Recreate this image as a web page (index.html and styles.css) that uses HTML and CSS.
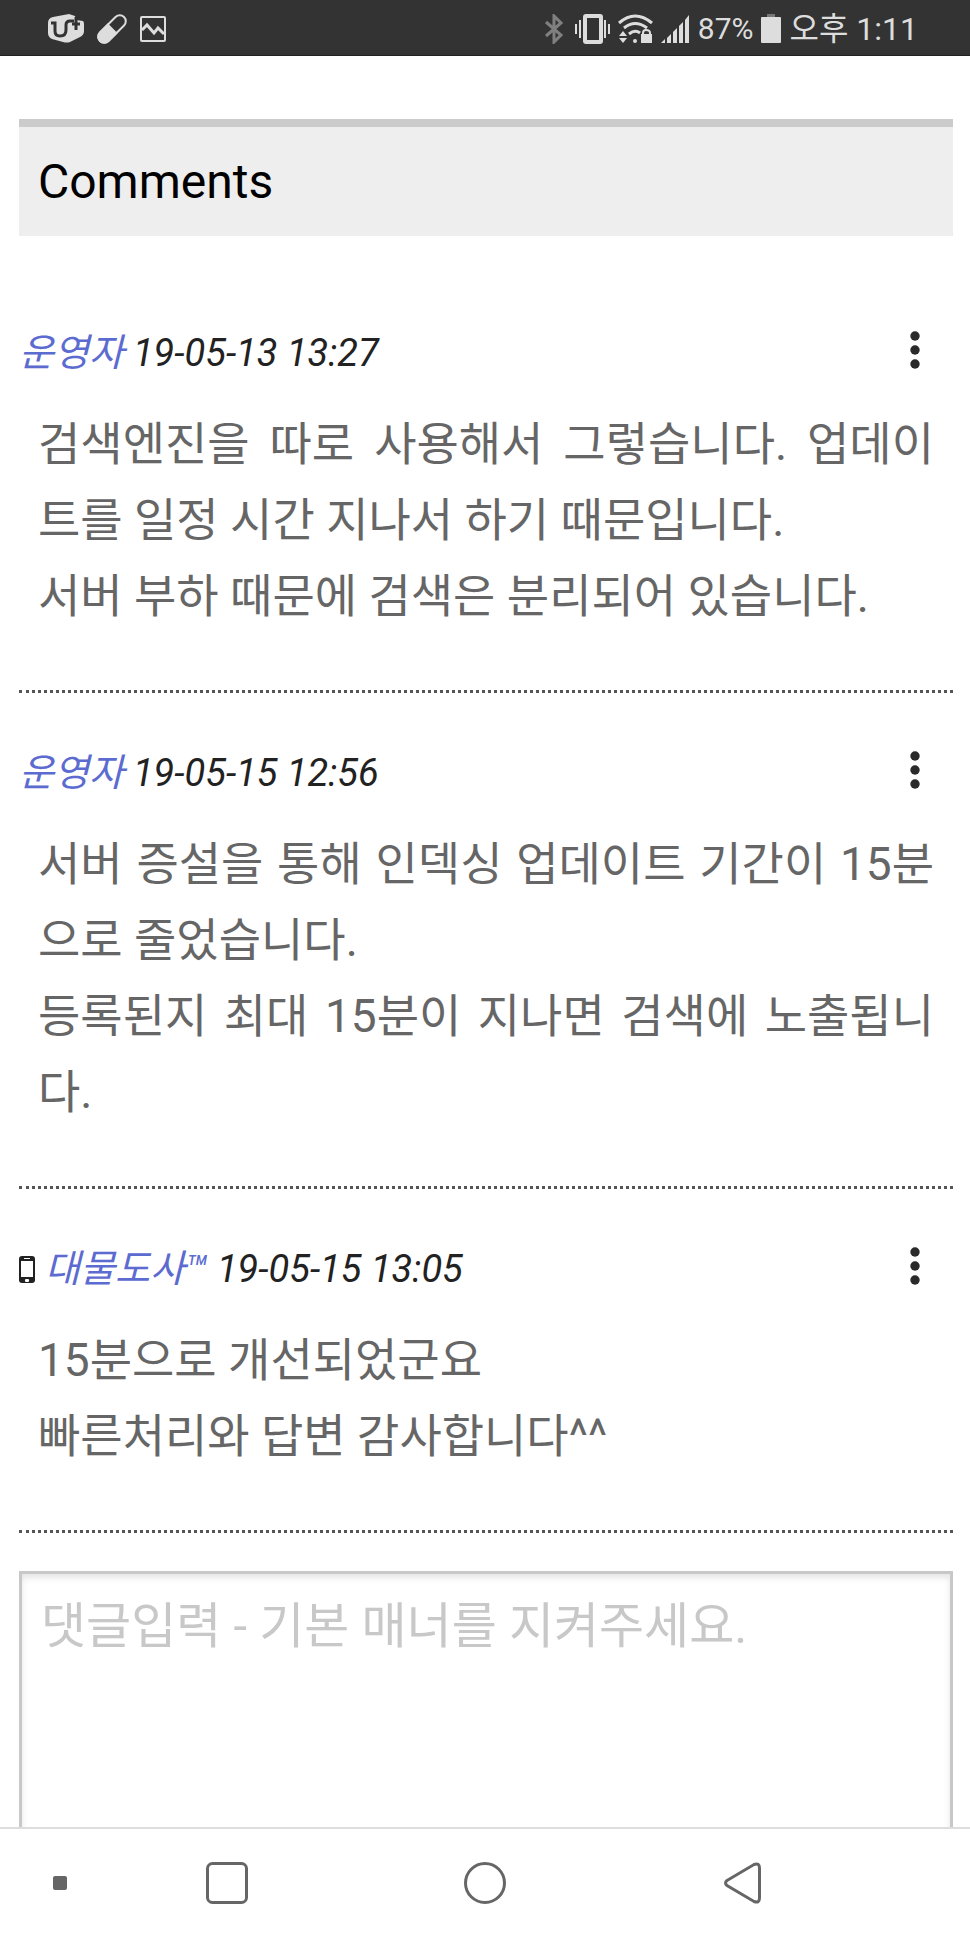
FILE: index.html
```html
<!DOCTYPE html>
<html lang="ko">
<head>
  <meta charset="UTF-8" />
  <meta name="viewport" content="width=device-width, initial-scale=1.0"/>
  <title>Comments</title>
  <link rel="stylesheet" href="styles.css">
</head>
<body>

  <header class="status-bar">
    <div class="status-left">
      <svg width="36" height="30" viewBox="0 0 36 30">
        <path d="M5 3 L21 0 L27 2 L28 6 L35 7 Q36 8 36 10 V17 Q36 21 32 23 L22 28 Q19 29 15 28 L4 25 Q0 23 0 19 V9 Q0 4 5 3Z" fill="#ddd"/>
        <path d="M3 9 H7 V17 Q7 22 12 22 Q18 22 18 16 V11 Q18 7 22 7 H26" fill="none" stroke="#333" stroke-width="3"/>
        <path d="M28 3 V16 M24 10 H32" fill="none" stroke="#333" stroke-width="3"/>
      </svg>
      <svg width="30" height="30" viewBox="0 0 30 30">
        <g transform="rotate(45 15 15)">
          <rect x="9" y="-2" width="12" height="34" rx="6" fill="none" stroke="#ddd" stroke-width="2"/>
          <path d="M8 14 H22 V26 A7 7 0 0 1 8 26Z" fill="#ddd"/>
        </g>
      </svg>
      <svg width="26" height="30" viewBox="0 0 26 30">
        <rect x="1" y="3" width="24" height="24" rx="1" fill="none" stroke="#ddd" stroke-width="2"/>
        <path d="M2 16 L7 11 L14 19 L18 14 L24 20" fill="none" stroke="#ddd" stroke-width="3"/>
      </svg>
    </div>
    <div class="status-right">
      <svg width="26" height="30" viewBox="0 0 26 30">
        <path d="M5 8 L20 21 L13 28 V2 L20 9 L5 22" fill="none" stroke="#808080" stroke-width="3"/>
      </svg>
      <svg width="35" height="30" viewBox="0 0 35 30">
        <rect x="10" y="2" width="16" height="26" rx="1" fill="none" stroke="#ddd" stroke-width="4"/>
        <path d="M1 10 V20 M5 6 V24 M30 6 V24 M34 10 V20" stroke="#ddd" stroke-width="2"/>
      </svg>
      <svg width="35" height="30" viewBox="0 0 35 30">
        <path d="M1 9 Q17 -5 34 9 M6 14 Q17 5 29 14 M11 20 Q17 15 22 19" fill="none" stroke="#ddd" stroke-width="3"/>
        <path d="M1 22 L5 17 L9 22Z M1 24 L5 29 L9 24Z" fill="#ddd"/>
        <circle cx="17" cy="27" r="2" fill="#ddd"/>
        <rect x="23" y="20" width="11" height="9" fill="#ddd"/>
        <path d="M25 21 V19 Q25 16 28 16 Q32 16 32 19 V21" fill="none" stroke="#ddd" stroke-width="2"/>
      </svg>
      <svg width="29" height="30" viewBox="0 0 29 30">
        <path d="M0 29 L4 25 V29Z M6 24 L10 20 V29 H6Z M12 18 L16 14 V29 H12Z M18 12 L22 8 V29 H18Z M24 6 L28 1 V29 H24Z" fill="#ddd"/>
      </svg>
      <span class="battery-level">87%</span>
      <svg width="20" height="30" viewBox="0 0 20 30">
        <rect x="6" y="0" width="8" height="4" fill="#777"/>
        <rect x="0" y="3" width="20" height="26" rx="1" fill="#ddd"/>
      </svg>
      <span class="clock">오후 1:11</span>
    </div>
  </header>

  <main class="content">
    <h1 class="section-title">Comments</h1>

    <article class="comment">
      <div class="comment-head">
        <a href="#" class="author">운영자</a>
        <time class="date">19-05-13 13:27</time>
        <button type="button" class="menu-btn" aria-label="메뉴">
          <svg width="10" height="38" viewBox="0 0 10 38">
            <circle cx="5" cy="5" r="4.700"/><circle cx="5" cy="19" r="4.700"/><circle cx="5" cy="33" r="4.700"/>
          </svg>
        </button>
      </div>
      <p class="comment-text">검색엔진을 따로 사용해서 그렇습니다. 업데이트를 일정 시간 지나서 하기 때문입니다.<br>서버 부하 때문에 검색은 분리되어 있습니다.</p>
    </article>

    <article class="comment">
      <div class="comment-head">
        <a href="#" class="author">운영자</a>
        <time class="date">19-05-15 12:56</time>
        <button type="button" class="menu-btn" aria-label="메뉴">
          <svg width="10" height="38" viewBox="0 0 10 38">
            <circle cx="5" cy="5" r="4.700"/><circle cx="5" cy="19" r="4.700"/><circle cx="5" cy="33" r="4.700"/>
          </svg>
        </button>
      </div>
      <p class="comment-text">서버 증설을 통해 인덱싱 업데이트 기간이 15분으로 줄었습니다.<br>등록된지 최대 15분이 지나면 검색에 노출됩니다.</p>
    </article>

    <article class="comment">
      <div class="comment-head">
        <svg class="mobile-icon" width="16" height="27" viewBox="0 0 16 27">
          <rect x="0" y="0" width="16" height="27" rx="3" fill="#222"/>
          <rect x="2" y="5" width="12" height="16" fill="#fff"/>
          <rect x="5" y="2" width="6" height="1" fill="#fff"/>
          <rect x="6" y="23" width="4" height="3" rx="1" fill="#fff"/>
        </svg>
        <a href="#" class="author">대물도사™</a>
        <time class="date">19-05-15 13:05</time>
        <button type="button" class="menu-btn" aria-label="메뉴">
          <svg width="10" height="38" viewBox="0 0 10 38">
            <circle cx="5" cy="5" r="4.700"/><circle cx="5" cy="19" r="4.700"/><circle cx="5" cy="33" r="4.700"/>
          </svg>
        </button>
      </div>
      <p class="comment-text">15분으로 개선되었군요<br>빠른처리와 답변 감사합니다^^</p>
    </article>

    <form class="comment-form">
      <textarea class="comment-input" name="comment" aria-label="댓글입력" placeholder="댓글입력 - 기본 매너를 지켜주세요."></textarea>
    </form>
  </main>

  <nav class="nav-bar">
    <button type="button" class="nav-btn nav-dot" aria-label="숨기기">
      <svg width="14" height="14" viewBox="0 0 14 14"><rect width="14" height="14" rx="2" fill="#666"/></svg>
    </button>
    <button type="button" class="nav-btn" aria-label="최근 앱">
      <svg width="42" height="42" viewBox="0 0 42 42"><rect x="1.5" y="1.5" width="39" height="39" rx="5"/></svg>
    </button>
    <button type="button" class="nav-btn" aria-label="홈">
      <svg width="42" height="42" viewBox="0 0 42 42"><circle cx="21" cy="21" r="19.5"/></svg>
    </button>
    <button type="button" class="nav-btn" aria-label="뒤로">
      <svg width="38" height="42" viewBox="0 0 38 42"><path d="M3 18.500 L30 2.500 Q35.500 0.500 35.500 6 V36 Q35.500 41.500 30 39.500 L3 23.500 Q0 21 3 18.500Z"/></svg>
    </button>
  </nav>

</body>
</html>
```
FILE: styles.css
```css
* {
  margin: 0;
  padding: 0;
  box-sizing: border-box;
  font-family: Roboto, "Noto Sans CJK KR", sans-serif;
}

body {
  height: 100vh;
  display: flex;
  flex-direction: column;
  background: #fff;
  color: #222;
}

/* status bar */
.status-bar {
  flex: none;
  display: flex;
  justify-content: space-between;
  align-items: center;
  height: 56px;
  padding: 2px 52px 0 48px;
  background: #333;
  border-bottom: 1px solid #222;
  color: #ddd;
}

.status-left,
.status-right {
  display: flex;
  align-items: center;
}

.status-left {
  gap: 13px;
}

.status-right {
  gap: 8px;
}

.battery-level {
  font-size: 30px;
}

.clock {
  font-size: 32px;
  line-height: 40px;
}

/* comments */
.content {
  flex: 1;
  min-height: 0;
  overflow: hidden;
  padding: 63px 17px 0 19px;
}

.section-title {
  margin-bottom: 37px;
  padding: 24px 19px;
  border-top: 8px solid #cbcbcb;
  background: #eee;
  color: #000;
  font-size: 48px;
  font-weight: 400;
  line-height: 61px;
}

.comment {
  padding: 56px 0;
  border-bottom: 3px dotted #555;
}

.comment-head {
  display: flex;
  align-items: center;
  margin-bottom: 29px;
  font-size: 38px;
  font-style: italic;
  line-height: 48px;
}

.mobile-icon {
  margin-right: 10px;
}

.author {
  color: #5c6bd0;
  text-decoration: none;
}

.date {
  margin-left: 9px;
}

.menu-btn {
  display: flex;
  margin-left: auto;
  padding: 0 33px 6px;
  border: none;
  background: none;
  fill: #2a2a2a;
  cursor: pointer;
}

.comment-text {
  padding: 0 19px;
  color: #666;
  font-size: 46px;
  line-height: 76px;
  text-align: justify;
}

.comment-form {
  padding-top: 38px;
}

.comment-input {
  display: block;
  width: 100%;
  height: 300px;
  padding: 18px 19px;
  border: 3px solid #c8c8c8;
  border-radius: 0;
  box-shadow: inset 0 4px 6px rgba(0, 0, 0, 0.1);
  background: #fff;
  color: #333;
  font-size: 49px;
  line-height: 70px;
  resize: none;
  outline: none;
}

.comment-input::placeholder {
  color: #c8c8c8;
}

/* navigation bar */
.nav-bar {
  flex: none;
  display: grid;
  grid-template-columns: 98px 1fr 1fr 1fr 98px;
  height: 113px;
  padding-bottom: 4px;
  border-top: 2px solid #ddd;
  background: #fff;
}

.nav-btn {
  display: flex;
  justify-content: center;
  align-items: center;
  border: none;
  background: none;
  fill: none;
  stroke: #666;
  stroke-width: 3;
  cursor: pointer;
}

.nav-dot {
  padding-left: 22px;
  stroke: none;
}
```
